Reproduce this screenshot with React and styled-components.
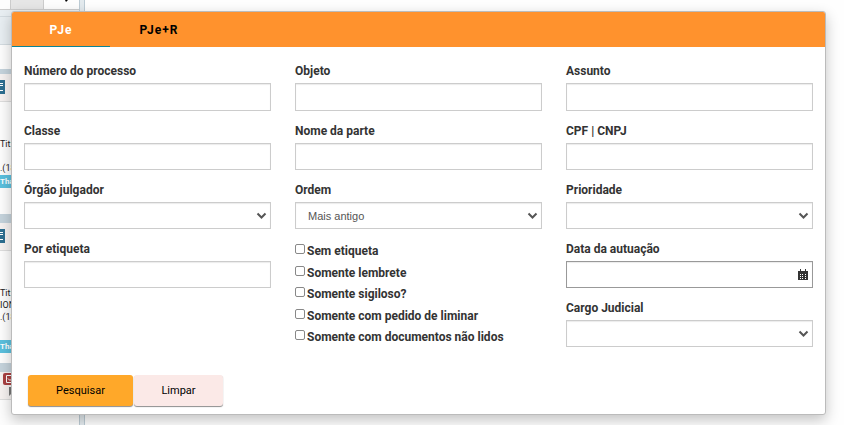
import React from "react";
import styled, { createGlobalStyle } from "styled-components";

const Global = createGlobalStyle`
  * { box-sizing: border-box; }
  body { margin: 0; background: #fefefe; color: #333; font: 11px/16px Roboto, "Liberation Sans", sans-serif; overflow: hidden; }
  button, input, select { font: inherit; }
`;

const Page = styled.main`
  position: relative;
  min-height: 100vh;
  overflow: hidden;
`;

const Sidebar = styled.aside`
  width: 85px;
  height: 100vh;
  overflow: hidden;
  border-right: 1px solid #bccbd4;
  background: #e3eaee;
  padding-right: 4px;
`;

const SidebarInner = styled.div`
  height: 100%;
  border-right: 1px solid #bccbd4;
  background: #fdfdfd;
`;

const Tools = styled.div`
  display: flex;
  height: 10px;
  padding-left: 10px;
  border-bottom: 1px solid #ccc;
`;

const ToolButton = styled.button`
  width: 34px;
  padding: 0;
  border: solid #ccc;
  border-width: 0 1px;
  background: #e6e6e6;
`;

const Caret = styled.svg`
  width: 6px;
  height: 3px;
  margin-left: 19px;
`;

const Strip = styled.div`
  height: ${(p) => (p.$tall ? 28 : 7)}px;
  background: #e8eef2;
  border-bottom: 1px solid #d3dbe0;
`;

const Blank = styled.div`
  height: 24px;
`;

const Card = styled.article`
  height: ${(p) => p.$height}px;
  border-top: ${(p) => (p.$first ? 5 : 9)}px solid #c5d3dc;
  overflow: hidden;
`;

const CardHead = styled.header`
  display: flex;
  align-items: flex-start;
  height: 28px;
  padding-top: ${(p) => (p.$flush ? 1 : 6)}px;
  background: #f6f2f1;
  border-bottom: 1px solid #ddd;
`;

const CardText = styled.div`
  padding-top: ${(p) => p.$top}px;
  font-size: 9px;
  line-height: 12px;
  white-space: pre;
  color: #222;
`;

const Tag = styled.div`
  height: 13px;
  margin-top: ${(p) => p.$gap}px;
  background: #5bc0de;
  color: #fff;
  font-size: 8px;
  font-weight: 700;
  line-height: 13px;
`;

const Panel = styled.form`
  position: absolute;
  top: 11px;
  left: 11px;
  right: 18px;
  border: 1px solid #bbb;
  border-radius: 3px;
  background: #fff;
  box-shadow: 0 5px 14px rgba(0, 0, 0, 0.24);
`;

const Tabs = styled.nav`
  display: flex;
  height: 35px;
  background: #ff922d;
  border-radius: 2px 2px 0 0;
`;

const Tab = styled.button`
  width: 98px;
  padding: 2px 0 0;
  border: 0;
  border-bottom: 1px solid ${(p) => (p.$active ? "#0d8595" : "transparent")};
  background: none;
  color: ${(p) => (p.$active ? "#fff" : "#000")};
  font-size: 12px;
  font-weight: 700;
  letter-spacing: 1px;
`;

const Columns = styled.div`
  display: grid;
  grid-template-columns: repeat(3, 1fr);
  gap: 24px;
  padding: 12px 12px 0;
`;

const Column = styled.div`
  min-width: 0;
`;

const Field = styled.div`
  position: relative;
  margin-bottom: 8px;
`;

const Label = styled.label`
  display: block;
  height: 24px;
  font-size: 12px;
  font-weight: 700;
  line-height: 24px;
  color: #333;
`;

const Input = styled.input`
  display: block;
  width: 100%;
  height: ${(p) => (p.$tall ? 28 : 27)}px;
  padding: 4px 12px;
  border: 1px solid ${(p) => (p.$dark ? "#999" : "#ccc")};
  border-radius: 0;
  background: #fff;
  box-shadow: inset 0 1px 1px rgba(0, 0, 0, 0.08);
  outline: 0;
`;

const Select = styled.select`
  display: block;
  width: 100%;
  height: 27px;
  padding: 0 24px 0 12px;
  border: 1px solid #ccc;
  border-radius: 0;
  background: #fff;
  box-shadow: inset 0 1px 1px rgba(0, 0, 0, 0.08);
  color: #555;
  font-family: "Liberation Sans", sans-serif;
  appearance: none;
`;

const FieldIcon = styled.svg`
  position: absolute;
  right: 4px;
  bottom: 8px;
  width: 11px;
  height: 11px;
  pointer-events: none;
`;

const Checks = styled.div`
  display: flex;
  flex-direction: column;
  justify-content: space-between;
  height: 102px;
  margin-top: 14px;
`;

const Check = styled.label`
  display: flex;
  align-items: flex-start;
  gap: 2px;
  font-size: 12px;
  font-weight: 700;
  line-height: 16px;
`;

const Box = styled.input`
  flex: none;
  appearance: none;
  width: 10px;
  height: 10px;
  margin: 1px 0 0;
  border: 1px solid #888;
  border-radius: 2px;
  background: #fff;
  &:checked { background: #0d8595; }
`;

const Actions = styled.div`
  display: flex;
  gap: 1px;
  padding: 20px 16px 8px;
`;

const Action = styled.button`
  min-width: ${(p) => (p.$primary ? 105 : 89)}px;
  height: 31px;
  padding: 0;
  border: 0;
  border-radius: 3px;
  background: ${(p) => (p.$primary ? "#ffa829" : "#fbe9e7")};
  color: #000;
  box-shadow: 0 1px 1px rgba(0, 0, 0, 0.45);
`;

const HeadIcon = styled.svg`
  flex: none;
`;

const ListIcon = () => (
  <HeadIcon width="5" height="14" viewBox="0 0 5 14" aria-hidden="true">
    <path fill="#2d6e90" d="M0 0h5v14H0z" />
    <path stroke="#fff" d="M0 3.5h3M0 5.5h3M0 10.5h3" />
  </HeadIcon>
);

const TaskIcon = () => (
  <HeadIcon width="24" height="24" viewBox="0 0 24 24" aria-hidden="true">
    <rect x="3" width="18" height="12" rx="2" fill="#a94042" />
    <path fill="none" stroke="#fff" d="M13.5 6v3.500h-7v-7h6M8 5.500l2 2 4-4" />
    <path fill="#777" d="M9 14h8v6h-5l-3 3z" />
  </HeadIcon>
);

const Chevron = () => (
  <FieldIcon viewBox="0 0 11 11" aria-hidden="true">
    <path fill="none" stroke="#555" strokeWidth="2" d="M1.5 3.5l4 4 4-4" />
  </FieldIcon>
);

const Calendar = () => (
  <FieldIcon viewBox="0 0 11 11" aria-hidden="true">
    <path fill="#333" d="M0 2h2V0h1v2h4V0h1v2h2v9H0z" />
    <path fill="#fff" d="M2 5h1v1H2zM4 5h1v1H4zM7 5h1v1H7zM2 7h1v1H2zM4 7h1v1H4zM7 7h1v1H7zM2 9h1v1H2zM4 9h1v1H4zM7 9h1v1H7z" />
  </FieldIcon>
);

const TextField = ({ id, label, tall, calendar }) => (
  <Field>
    <Label htmlFor={id}>{label}</Label>
    <Input id={id} $tall={tall} $dark={calendar} />
    {calendar && <Calendar />}
  </Field>
);

const SelectField = ({ id, label, value = "" }) => (
  <Field>
    <Label htmlFor={id}>{label}</Label>
    <Select id={id} defaultValue={value}>
      <option>{value}</option>
    </Select>
    <Chevron />
  </Field>
);

const filters = [
  "Sem etiqueta",
  "Somente lembrete",
  "Somente sigiloso?",
  "Somente com pedido de liminar",
  "Somente com documentos não lidos",
];

export default function App() {
  return (
    <Page>
      <Global />
      <Sidebar>
        <SidebarInner>
          <Tools>
            <ToolButton type="button" aria-label="Opções" />
            <Caret viewBox="0 0 6 3" aria-hidden="true"><path d="M2 0h3L3 2z" /></Caret>
          </Tools>
          <Strip />
          <Strip $tall />
          <Blank />
          <Card $height={145} $first>
            <CardHead><ListIcon /></CardHead>
            <CardText $top={36}>{"Tit:\n\n.(18"}</CardText>
            <Tag $gap={1}>That</Tag>
          </Card>
          <Card $height={149}>
            <CardHead><ListIcon /></CardHead>
            <CardText $top={36}>{"Tit:\nION\n.(18"}</CardText>
            <Tag $gap={17}>That</Tag>
          </Card>
          <Card $height={62}>
            <CardHead $flush><TaskIcon /></CardHead>
          </Card>
        </SidebarInner>
      </Sidebar>
      <Panel onSubmit={(e) => e.preventDefault()}>
        <Tabs>
          <Tab type="button" $active>PJe</Tab>
          <Tab type="button">PJe+R</Tab>
        </Tabs>
        <Columns>
          <Column>
            <TextField id="numero" label="Número do processo" tall />
            <TextField id="classe" label="Classe" />
            <SelectField id="orgao" label="Órgão julgador" />
            <TextField id="etiqueta" label="Por etiqueta" />
          </Column>
          <Column>
            <TextField id="objeto" label="Objeto" tall />
            <TextField id="parte" label="Nome da parte" />
            <SelectField id="ordem" label="Ordem" value="Mais antigo" />
            <Checks>
              {filters.map((f) => (
                <Check key={f}><Box type="checkbox" />{f}</Check>
              ))}
            </Checks>
          </Column>
          <Column>
            <TextField id="assunto" label="Assunto" tall />
            <TextField id="cpf" label="CPF | CNPJ" />
            <SelectField id="prioridade" label="Prioridade" />
            <TextField id="data" label="Data da autuação" calendar />
            <SelectField id="cargo" label="Cargo Judicial" />
          </Column>
        </Columns>
        <Actions>
          <Action type="submit" $primary>Pesquisar</Action>
          <Action type="reset">Limpar</Action>
        </Actions>
      </Panel>
    </Page>
  );
}
